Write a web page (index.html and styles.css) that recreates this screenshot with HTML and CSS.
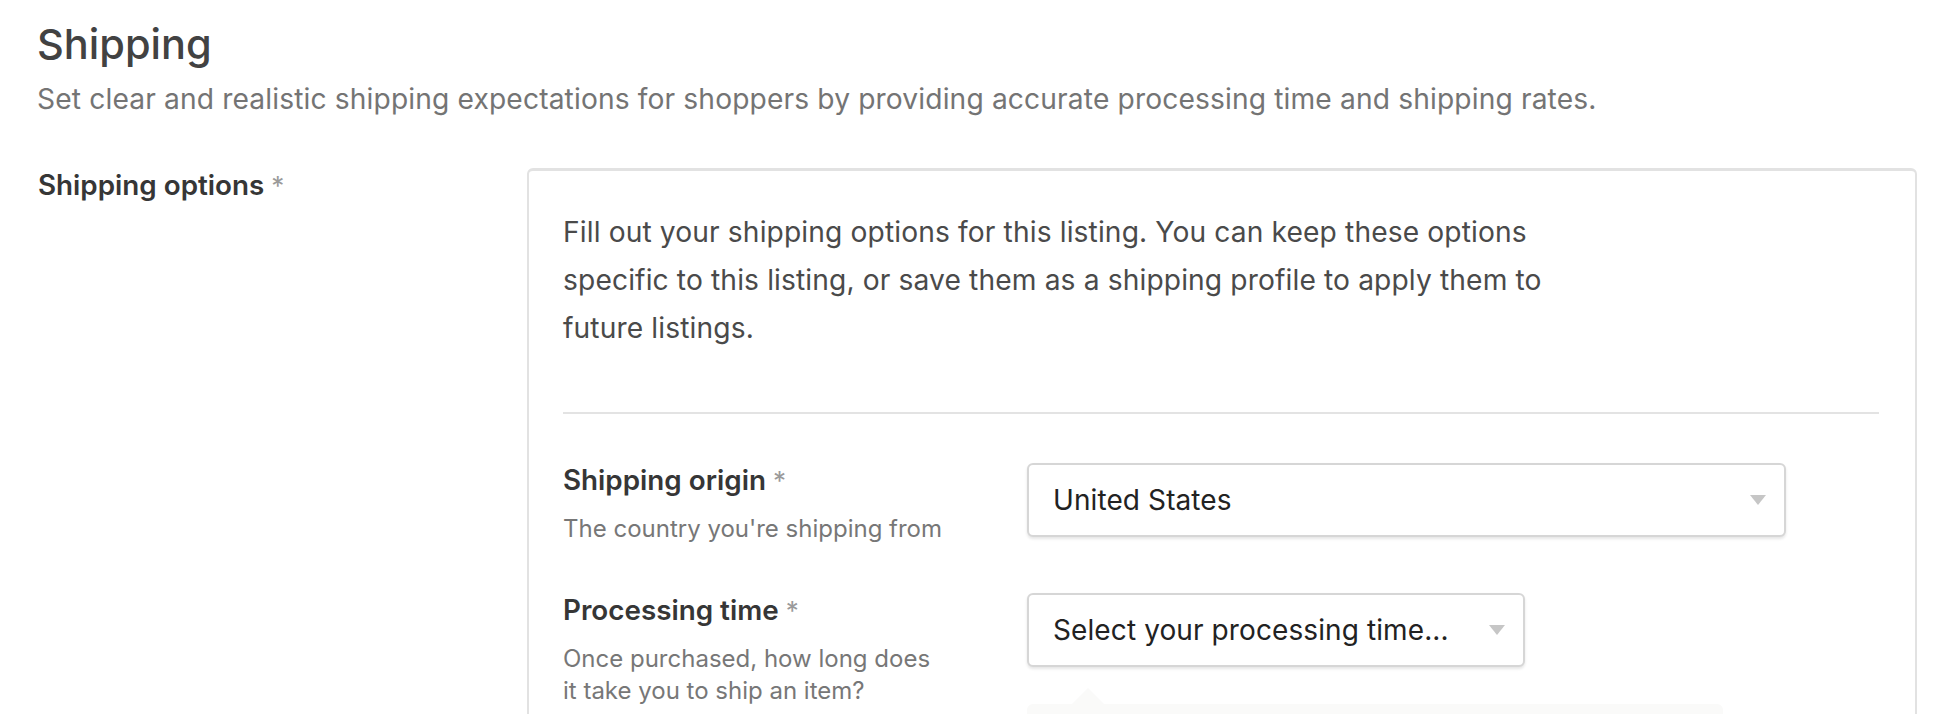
FILE: index.html
```html
<!DOCTYPE html>
<html lang="en">
<head>
<meta charset="utf-8">
<title>Shipping</title>
<link rel="stylesheet" href="styles.css">
</head>
<body>
<main class="page">
  <header class="section-head">
    <h1 class="title">Shipping</h1>
    <p class="subtitle">Set clear and realistic shipping expectations for shoppers by providing accurate processing time and shipping rates.</p>
  </header>

  <section class="field-row">
    <div class="field-label">Shipping options <span class="req">*</span></div>
    <div class="card">
      <p class="intro">Fill out your shipping options for this listing. You can keep these options specific to this listing, or save them as a shipping profile to apply them to future listings.</p>
      <hr class="divider">

      <div class="sub-row">
        <div class="sub-label">
          <div class="label">Shipping origin <span class="req">*</span></div>
          <div class="caption">The country you're shipping from</div>
        </div>
        <div class="control">
          <div class="select select-wide">
            <span class="select-text">United States</span>
            <span class="caret"></span>
          </div>
        </div>
      </div>

      <div class="sub-row">
        <div class="sub-label">
          <div class="label">Processing time <span class="req">*</span></div>
          <div class="caption caption-narrow">Once purchased, how long does it take you to ship an item?</div>
        </div>
        <div class="control">
          <div class="select select-narrow">
            <span class="select-text">Select your processing time...</span>
            <span class="caret"></span>
          </div>
          <div class="hint"></div>
        </div>
      </div>
    </div>
  </section>
</main>
</body>
</html>
```
FILE: styles.css
```css
html, body {
  margin: 0;
  padding: 0;
  background: #ffffff;
}

body {
  font-family: "Inter", "Roboto", "Liberation Sans", sans-serif;
  color: #444444;
  overflow: hidden;
}

.page {
  padding: 20px 37px 0 37px;
}

.section-head {
  margin: 0;
}

.title {
  margin: 0;
  font-size: 41.5px;
  line-height: 48px;
  font-weight: 500;
  color: #424242;
}

.subtitle {
  margin: 11px 0 0 0;
  font-size: 28.2px;
  line-height: 40px;
  font-weight: 400;
  color: #747474;
  letter-spacing: 0.13px;
}

.field-row {
  display: grid;
  grid-template-columns: 490px 1fr;
  margin-top: 46px;
  align-items: start;
}

.field-label {
  font-size: 27.8px;
  line-height: 40px;
  font-weight: 600;
  color: #363636;
  padding-left: 1px;
}

.req {
  font-weight: 400;
  color: #9a9a9a;
  font-size: 26px;
}

.card {
  margin-top: 3px;
  border: 2px solid #e2e2e2;
  border-top-width: 3px;
  border-radius: 6px;
  padding: 37px 36px 120px 34px;
  background: #ffffff;
}

.intro {
  margin: 0;
  max-width: 1000px;
  font-size: 28.2px;
  line-height: 48px;
  color: #4a4a4a;
  letter-spacing: 0.12px;
}

.divider {
  margin: 60px 0 0 0;
  border: 0;
  height: 2px;
  background: #e3e3e3;
}

.sub-row {
  display: grid;
  grid-template-columns: 464px 1fr;
  align-items: start;
}

.divider + .sub-row {
  margin-top: 46px;
}

.sub-row + .sub-row {
  margin-top: 45px;
}

.label {
  font-size: 27.8px;
  line-height: 40px;
  font-weight: 600;
  color: #363636;
}

.caption {
  margin-top: 12px;
  font-size: 24px;
  line-height: 32px;
  color: #777777;
}

.caption-narrow {
  max-width: 372px;
}

.control {
  display: flex;
  flex-direction: column;
  align-items: flex-start;
  padding-top: 3px;
}

.select {
  box-sizing: border-box;
  height: 74px;
  border: 2px solid #d6d6d6;
  border-radius: 6px;
  box-shadow: 0 2px 3px rgba(0, 0, 0, 0.10);
  background: #ffffff;
  display: flex;
  align-items: center;
  justify-content: space-between;
  padding: 0 18px 0 24px;
}

.select-wide {
  width: 759px;
}

.select-narrow {
  width: 498px;
}

.select-text {
  font-size: 28px;
  line-height: 40px;
  color: #222222;
  letter-spacing: 0.1px;
}

.caret {
  width: 0;
  height: 0;
  border-left: 8px solid transparent;
  border-right: 8px solid transparent;
  border-top: 10px solid #c6c6c6;
}

.hint {
  position: relative;
  margin-top: 37px;
  width: 696px;
  height: 120px;
  background: #fafaf9;
  border-radius: 6px;
}

.hint::before {
  content: "";
  position: absolute;
  left: 45px;
  top: -16px;
  width: 0;
  height: 0;
  border-left: 16px solid transparent;
  border-right: 16px solid transparent;
  border-bottom: 16px solid #fafaf9;
}
```
